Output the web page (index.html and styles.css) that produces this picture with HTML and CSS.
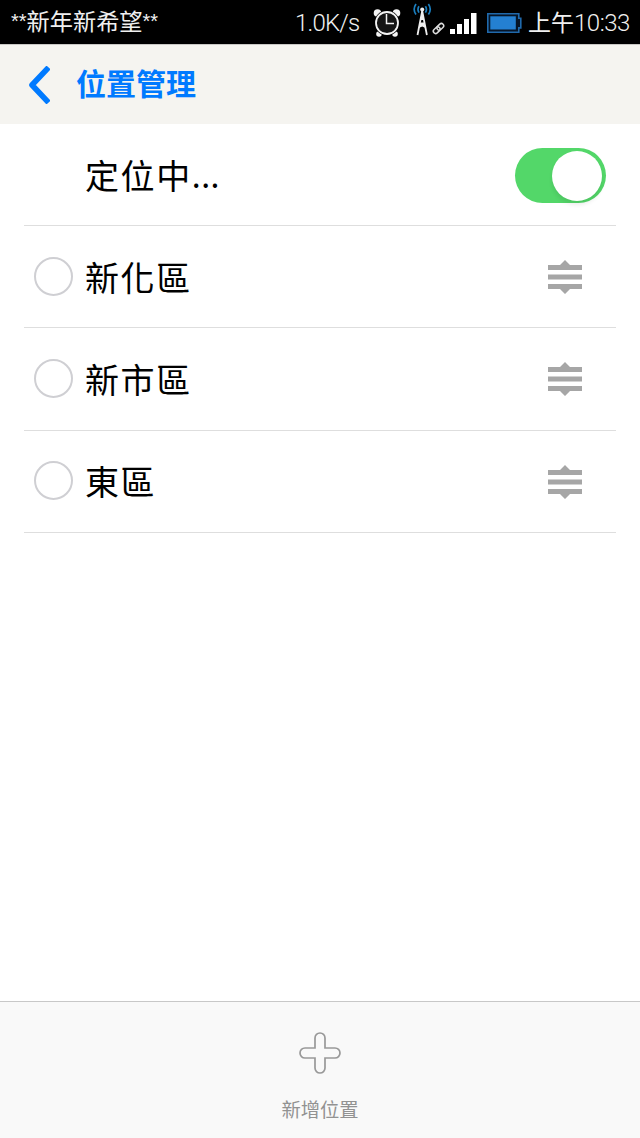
FILE: index.html
```html
<!DOCTYPE html>
<html lang="zh-Hant">
<head>
<meta charset="utf-8">
<title>位置管理</title>
<link rel="stylesheet" href="styles.css">
</head>
<body>
<div class="status">
  <div class="ticker"><span class="stars">**</span>新年新希望<span class="stars">**</span></div>
  <span class="speed">1.0K/s</span>
  <svg class="alarm" width="28" height="30" viewBox="0 0 28 30">
    <g fill="#f4f4f4"><circle cx="4.500" cy="5" r="3.800"/><circle cx="23.500" cy="5" r="3.800"/><circle cx="6" cy="26" r="2.800"/><circle cx="22" cy="26" r="2.800"/></g>
    <circle cx="14" cy="15" r="12.600" fill="#000"/>
    <circle cx="14" cy="15" r="11" fill="#151515" stroke="#f4f4f4" stroke-width="1.800"/>
    <path d="M13.500 6v9.500h7.500" fill="none" stroke="#f4f4f4" stroke-width="1.500"/>
  </svg>
  <svg class="tower" width="32" height="34" viewBox="0 0 32 34">
    <g fill="none" stroke="#1b7fc0" stroke-width="1.700"><path d="M6 3.200q-2.100 3.200 0 6.400M3 1q-3.700 5.300 0 10.600M12.400 3.200q2.100 3.200 0 6.400M15.400 1q3.700 5.300 0 10.600"/></g>
    <circle cx="9.200" cy="6.500" r="2" fill="#eee"/>
    <path d="M9.200 8L4.500 32M9.200 8l4.700 24" fill="none" stroke="#eee" stroke-width="1.800"/>
    <path d="M8.200 12h2l1 5h-4zM6.800 19.500h4.800l1 5.500-3.400-1.500-3.400 1.500z" fill="#eee"/>
    <g fill="none" stroke="#ddd" stroke-width="1.500" transform="translate(.5 -2.500) rotate(-43 25 28)"><rect x="18.800" y="25.700" width="7.500" height="4.600" rx="2.300"/><rect x="23.700" y="25.700" width="7.500" height="4.600" rx="2.300"/></g>
  </svg>
  <svg class="signal" width="27" height="21" viewBox="0 0 27 21"><path fill="#fff" d="M0 16h5v5H0zM7 11h5v10H7zM14 6h5v15h-5zM21 0h5.500v21H21z"/></svg>
  <svg class="battery" width="35" height="20" viewBox="0 0 35 20">
    <path d="M.8.800h31v4.500h2v9.600h-2v4.300H.8z" fill="#061527" stroke="#2069ab" stroke-width="1.600"/>
    <rect x="3.300" y="3.300" width="25.500" height="13.200" fill="#2480d2"/>
  </svg>
  <span class="clock">上午<span class="digits">10:33</span></span>
</div>
<header class="header">
  <svg class="back" width="24" height="38" viewBox="0 0 24 38"><path d="M20.600 3.500L6 19l14.600 15.500" fill="none" stroke="#007aff" stroke-width="5.600" stroke-linecap="square" stroke-linejoin="round"/></svg>
  <h1 class="title">位置管理</h1>
</header>
<main class="list">
  <div class="row">
    <span class="name">定位中<span class="dots">...</span></span>
    <span class="toggle"><span class="knob"></span></span>
  </div>
  <div class="row">
    <span class="radio"></span><span class="name">新化區</span>
    <svg class="grip" width="36" height="36" viewBox="0 0 36 36"><path d="M1 6h12l5-5 5 5h12v5H1zM1 15.500h34v5H1zM1 25h34v5H23l-5 5-5-5H1z"/></svg>
  </div>
  <div class="row">
    <span class="radio"></span><span class="name">新市區</span>
    <svg class="grip" width="36" height="36" viewBox="0 0 36 36"><path d="M1 6h12l5-5 5 5h12v5H1zM1 15.500h34v5H1zM1 25h34v5H23l-5 5-5-5H1z"/></svg>
  </div>
  <div class="row">
    <span class="radio"></span><span class="name">東區</span>
    <svg class="grip" width="36" height="36" viewBox="0 0 36 36"><path d="M1 6h12l5-5 5 5h12v5H1zM1 15.500h34v5H1zM1 25h34v5H23l-5 5-5-5H1z"/></svg>
  </div>
</main>
<footer class="footer">
  <svg class="plus" width="42" height="42" viewBox="0 0 42 42"><path d="M16 16V6a5 5 0 0 1 10 0v10h10a5 5 0 0 1 0 10H26v10a5 5 0 0 1-10 0V26H6a5 5 0 0 1 0-10z" fill="none" stroke="#999" stroke-width="1.700"/></svg>
  <span class="add">新增位置</span>
</footer>
</body>
</html>
```
FILE: styles.css
```css
* { box-sizing: border-box; }
body {
  margin: 0;
  height: 1138px;
  display: flex;
  flex-direction: column;
  overflow: hidden;
  background: #fff;
  font-family: "Noto Sans CJK TC", sans-serif;
}
svg { display: block; flex: none; }
.status {
  height: 44px;
  flex: none;
  display: flex;
  align-items: flex-start;
  background: #000;
  color: #f0f0f0;
  white-space: nowrap;
}
.ticker {
  width: 284px;
  padding-left: 11px;
  font-size: 23.200px;
  line-height: 40px;
  font-weight: 400;
}
.stars {
  font-family: "Liberation Sans", sans-serif;
  font-size: 20px;
  line-height: 1;
  vertical-align: 2px;
}
.speed {
  width: 79px;
  margin-left: 11px;
  font: 300 24px/46px Roboto, sans-serif;
  letter-spacing: -.8px;
}
.alarm { margin-top: 8px; margin-left: -1px; }
.tower { margin: 3px 0 0 12px; }
.signal { margin: 13px 0 0 5px; }
.battery { margin: 13px 0 0 10px; }
.clock {
  margin-left: 6px;
  font-size: 23px;
  line-height: 42px;
  font-weight: 400;
}
.digits { font-family: Roboto, sans-serif; font-size: 24px; font-weight: 300; letter-spacing: -.5px; }
.header {
  height: 80px;
  flex: none;
  display: flex;
  align-items: flex-start;
  padding-left: 26px;
  border-top: 1px solid #c9c8c5;
  background: #f5f4f0;
}
.back { margin-top: 21px; }
.title {
  margin: 0 0 0 26px;
  color: #007aff;
  font-size: 30px;
  line-height: 75px;
  font-weight: 700;
}
.list { flex: 1; padding: 0 24px; }
.row {
  height: 102.200px;
  border-bottom: 1px solid #dedede;
  display: flex;
  align-items: center;
  padding: 0 10px 0 10px;
}
.name {
  margin-left: 51px;
  flex: 1;
  color: #000;
  font-size: 34px;
  line-height: 50px;
  letter-spacing: 1.600px;
}
.dots {
  font-size: 32px;
  line-height: 1;
  letter-spacing: .5px;
  vertical-align: 1px;
}
.radio + .name { margin-left: 12px; }
.radio {
  width: 39px;
  height: 39px;
  margin-top: -1px;
  border: 2px solid #cfcfd3;
  border-radius: 50%;
}
.grip { margin: 1px 23px 0 0; fill: #a6a6a6; }
.toggle {
  width: 91px;
  height: 55px;
  margin-top: 1px;
  padding: 3px 4px;
  display: flex;
  justify-content: flex-end;
  border-radius: 28px;
  background: #53d769;
}
.knob {
  width: 50px;
  height: 50px;
  border-radius: 50%;
  background: #fff;
  box-shadow: 0 4px 4px rgba(0, 0, 0, .08);
}
.footer {
  height: 137px;
  flex: none;
  display: flex;
  flex-direction: column;
  align-items: center;
  border-top: 1px solid #c8c8c8;
  background: #f9f9f9;
}
.plus { margin-top: 30px; }
.add {
  margin-top: 21px;
  color: #929292;
  font-size: 19.300px;
  line-height: 28px;
}
```
